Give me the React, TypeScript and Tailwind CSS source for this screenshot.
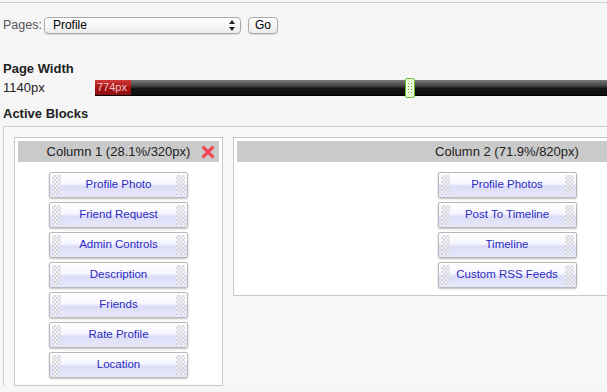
import React from 'react';

const col1Blocks = ['Profile Photo', 'Friend Request', 'Admin Controls', 'Description', 'Friends', 'Rate Profile', 'Location'];
const col2Blocks = ['Profile Photos', 'Post To Timeline', 'Timeline', 'Custom RSS Feeds'];

const Grip: React.FC = () => (
    <div className="w-[9px] self-stretch my-[2px] bg-[repeating-conic-gradient(#cfcfd6_0%_25%,#f2f2f6_0%_50%)] bg-[length:4px_4px] opacity-80" />
);

const BlockButton: React.FC<{ label: string }> = ({ label }) => (
    <div className="w-[139px] h-[26px] flex items-stretch px-[2px] border border-[#b8b8b8] rounded-[2px] shadow-[0_1px_2px_rgba(0,0,0,0.25)] bg-[linear-gradient(#ffffff_0%,#f6f6ff_45%,#dcdcf7_55%,#e8e8fb_100%)]">
        <Grip />
        <span className="flex-1 flex items-center justify-center text-[11.5px] text-[#2a2ac4]">{label}</span>
        <Grip />
    </div>
);

const RemoveIcon: React.FC = () => (
    <svg width="14" height="14" viewBox="0 0 14 14" className="absolute right-[4px] top-[4px]">
        <path d="M2.5 2.5 L11.5 11.5 M11.5 2.5 L2.5 11.5" stroke="#ee4b55" strokeWidth="3.2" strokeLinecap="round" />
    </svg>
);

const ColumnBox: React.FC<{ title: string; blocks: string[]; width: string; removable?: boolean }> = ({ title, blocks, width, removable }) => (
    <div className={`${width} shrink-0 bg-white border border-[#c8c8c8] p-[3px] pb-[7px]`}>
        <div className="relative h-[21px] bg-[#cacaca] flex items-center justify-center text-[13px] text-[#222]">
            {title}
            {removable && <RemoveIcon />}
        </div>
        <div className="flex flex-col items-center gap-[4px] mt-[10px]">
            {blocks.map(b => (
                <BlockButton key={b} label={b} />
            ))}
        </div>
    </div>
);

const App: React.FC = () => {
    return (
        <div className="w-[607px] h-[392px] overflow-hidden bg-[#f6f6f6] font-['Liberation_Sans',Arial,sans-serif] text-[#222]">
            <div className="h-[2px]" />
            <div className="h-px bg-[#cfcfcf]" />

            <div className="flex items-center pl-[3px] mt-[13px] h-[18px]">
                <span className="text-[12.5px] text-[#555] mr-[2px]">Pages:</span>
                <div className="w-[197px] h-[17px] flex items-center justify-between border border-[#a9a9a9] rounded-[4px] bg-[linear-gradient(#ffffff,#ececec)] shadow-[0_1px_1px_rgba(0,0,0,0.12)] pl-[8px] pr-[5px]">
                    <span className="text-[12px] text-black">Profile</span>
                    <svg width="6" height="11" viewBox="0 0 6 11">
                        <path d="M3 0 L6 4 L0 4 Z M0 7 L6 7 L3 11 Z" fill="#222" />
                    </svg>
                </div>
                <div className="ml-[7px] w-[30px] h-[17px] flex items-center justify-center border border-[#a9a9a9] rounded-[4px] bg-[linear-gradient(#ffffff,#ececec)] shadow-[0_1px_1px_rgba(0,0,0,0.12)] text-[12px] text-black">
                    Go
                </div>
            </div>

            <div className="pl-[3px] mt-[27px] text-[13px] font-bold leading-[16px]">Page Width</div>
            <div className="flex items-center mt-[1px] h-[20px]">
                <span className="w-[95px] pl-[3px] text-[13px]">1140px</span>
                <div className="relative flex-1 h-[16px] bg-[linear-gradient(#7a7a7a,#3a3a3a_45%,#151515_55%,#0d0d0d)] border-b border-black">
                    <div className="absolute left-0 top-0 h-[15px] w-[36px] bg-[linear-gradient(#d23a3a,#a51414_50%,#8e0e0e)] text-[11px] leading-[15px] text-[#f6c4c4] pl-[2px]">
                        774px
                    </div>
                    <div className="absolute left-[310px] top-[-2px] w-[10px] h-[20px] border border-[#6cbf2a] rounded-[2px] bg-[#e9f7dc] flex flex-col items-center justify-center gap-[2px]">
                        {[0, 1, 2, 3].map(i => (
                            <div key={i} className="flex gap-[2px]">
                                <div className="w-[1px] h-[1px] bg-[#5aa51f]" />
                                <div className="w-[1px] h-[1px] bg-[#5aa51f]" />
                            </div>
                        ))}
                    </div>
                </div>
            </div>

            <div className="pl-[3px] mt-[8px] text-[13px] font-bold leading-[16px]">Active Blocks</div>

            <div className="ml-[3px] mt-[4px] border-l border-t border-[#cfcfcf] bg-[#f8f8f8] pl-[10px] pt-[10px] flex gap-[10px] items-start">
                <ColumnBox title="Column 1 (28.1%/320px)" blocks={col1Blocks} width="w-[209px]" removable />
                <ColumnBox title="Column 2 (71.9%/820px)" blocks={col2Blocks} width="w-[548px]" />
            </div>
        </div>
    );
};

export default App;
